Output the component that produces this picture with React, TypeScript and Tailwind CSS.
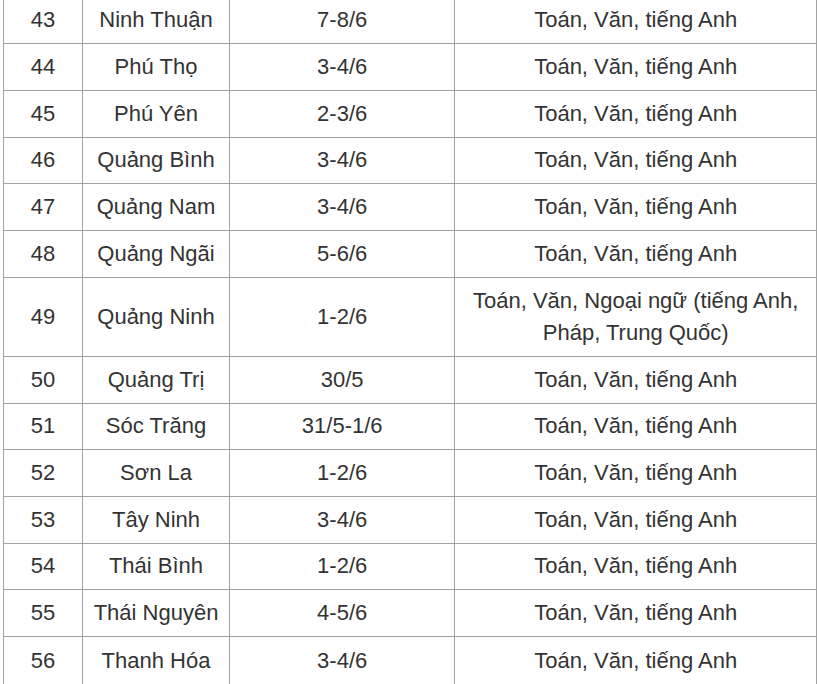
import React from "react";

interface ExamRow {
  no: number;
  province: string;
  date: string;
  subjects: string;
}

const rows: ExamRow[] = [
  { no: 43, province: "Ninh Thuận", date: "7-8/6", subjects: "Toán, Văn, tiếng Anh" },
  { no: 44, province: "Phú Thọ", date: "3-4/6", subjects: "Toán, Văn, tiếng Anh" },
  { no: 45, province: "Phú Yên", date: "2-3/6", subjects: "Toán, Văn, tiếng Anh" },
  { no: 46, province: "Quảng Bình", date: "3-4/6", subjects: "Toán, Văn, tiếng Anh" },
  { no: 47, province: "Quảng Nam", date: "3-4/6", subjects: "Toán, Văn, tiếng Anh" },
  { no: 48, province: "Quảng Ngãi", date: "5-6/6", subjects: "Toán, Văn, tiếng Anh" },
  {
    no: 49,
    province: "Quảng Ninh",
    date: "1-2/6",
    subjects: "Toán, Văn, Ngoại ngữ (tiếng Anh, Pháp, Trung Quốc)",
  },
  { no: 50, province: "Quảng Trị", date: "30/5", subjects: "Toán, Văn, tiếng Anh" },
  { no: 51, province: "Sóc Trăng", date: "31/5-1/6", subjects: "Toán, Văn, tiếng Anh" },
  { no: 52, province: "Sơn La", date: "1-2/6", subjects: "Toán, Văn, tiếng Anh" },
  { no: 53, province: "Tây Ninh", date: "3-4/6", subjects: "Toán, Văn, tiếng Anh" },
  { no: 54, province: "Thái Bình", date: "1-2/6", subjects: "Toán, Văn, tiếng Anh" },
  { no: 55, province: "Thái Nguyên", date: "4-5/6", subjects: "Toán, Văn, tiếng Anh" },
  { no: 56, province: "Thanh Hóa", date: "3-4/6", subjects: "Toán, Văn, tiếng Anh" },
];

const cell = "border border-[#a3a3a3] px-2 text-center align-middle";

const rowHeight = (no: number) => {
  if (no === 49) return "h-[79.4px]";
  if (no === 56) return "h-[50px]";
  return "h-[46.67px]";
};

const App: React.FC = () => {
  return (
    <div className="h-[684px] overflow-hidden bg-white font-['Liberation_Sans',Arial,sans-serif] text-[22px] leading-[32px] text-[#333333]">
      <table className="-mt-[3.4px] ml-[3px] w-[814px] table-fixed border-collapse">
        <colgroup>
          <col className="w-[79px]" />
          <col className="w-[147px]" />
          <col className="w-[225.4px]" />
          <col />
        </colgroup>
        <tbody>
          {rows.map((row) => (
            <tr key={row.no} className={rowHeight(row.no)}>
              <td className={cell}>{row.no}</td>
              <td className={cell}>{row.province}</td>
              <td className={cell}>{row.date}</td>
              <td className={cell}>{row.subjects}</td>
            </tr>
          ))}
        </tbody>
      </table>
    </div>
  );
};

export default App;
